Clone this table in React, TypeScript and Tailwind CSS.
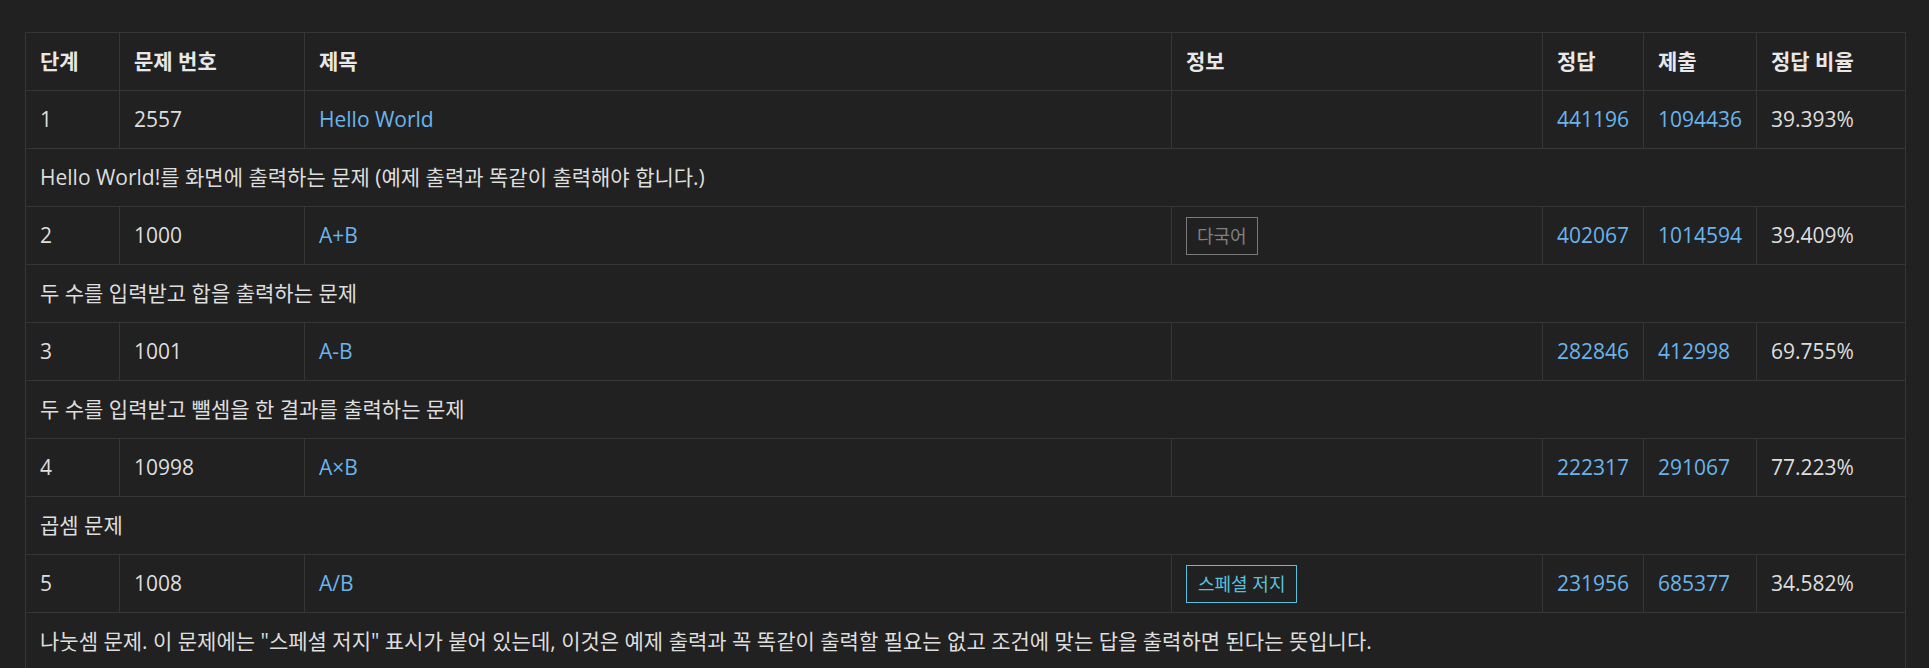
const rows = [
  {
    step: '1',
    id: '2557',
    title: 'Hello World',
    badge: null as null | 'multi' | 'special',
    ac: '441196',
    sub: '1094436',
    ratio: '39.393%',
    desc: 'Hello World!를 화면에 출력하는 문제 (예제 출력과 똑같이 출력해야 합니다.)',
  },
  {
    step: '2',
    id: '1000',
    title: 'A+B',
    badge: 'multi' as const,
    ac: '402067',
    sub: '1014594',
    ratio: '39.409%',
    desc: '두 수를 입력받고 합을 출력하는 문제',
  },
  {
    step: '3',
    id: '1001',
    title: 'A-B',
    badge: null,
    ac: '282846',
    sub: '412998',
    ratio: '69.755%',
    desc: '두 수를 입력받고 뺄셈을 한 결과를 출력하는 문제',
  },
  {
    step: '4',
    id: '10998',
    title: 'A×B',
    badge: null,
    ac: '222317',
    sub: '291067',
    ratio: '77.223%',
    desc: '곱셈 문제',
  },
  {
    step: '5',
    id: '1008',
    title: 'A/B',
    badge: 'special' as const,
    ac: '231956',
    sub: '685377',
    ratio: '34.582%',
    desc: '나눗셈 문제. 이 문제에는 "스페셜 저지" 표시가 붙어 있는데, 이것은 예제 출력과 꼭 똑같이 출력할 필요는 없고 조건에 맞는 답을 출력하면 된다는 뜻입니다.',
  },
];

function Badge({ kind }: { kind: 'multi' | 'special' }) {
  if (kind === 'multi') {
    return (
      <span className="inline-block border border-[#7a7a7a] px-[10px] text-[18px] leading-[36px] text-[#808080]">
        다국어
      </span>
    );
  }
  return (
    <span className="inline-block border border-[#5bc0de] px-[11px] text-[18px] leading-[36px] text-[#5bc0de]">
      스페셜 저지
    </span>
  );
}

const cell = 'border border-[#363636] px-[14px] h-[58px] align-middle';

export default function App() {
  return (
    <div
      className="min-h-screen w-full bg-[#212121] pt-[32px] pl-[25px] pr-[23px] text-[21px] text-[#dedede]"
      style={{ fontFamily: '"Open Sans", "Noto Sans CJK KR", sans-serif' }}
    >
      <table className="w-full table-fixed border-collapse">
        <colgroup>
          <col className="w-[94px]" />
          <col className="w-[185px]" />
          <col className="w-[867px]" />
          <col className="w-[371px]" />
          <col className="w-[101px]" />
          <col className="w-[113px]" />
          <col />
        </colgroup>
        <thead>
          <tr className="text-left font-bold text-[#e8e8e8]">
            <th className={cell}>단계</th>
            <th className={cell}>문제 번호</th>
            <th className={cell}>제목</th>
            <th className={cell}>정보</th>
            <th className={cell}>정답</th>
            <th className={cell}>제출</th>
            <th className={cell}>정답 비율</th>
          </tr>
        </thead>
        <tbody>
          {rows.map((r) => (
            <>
              <tr key={r.id}>
                <td className={cell}>{r.step}</td>
                <td className={cell}>{r.id}</td>
                <td className={cell}>
                  <a className="text-[#6ab4ec]">{r.title}</a>
                </td>
                <td className={cell}>{r.badge && <Badge kind={r.badge} />}</td>
                <td className={cell}>
                  <a className="text-[#6ab4ec]">{r.ac}</a>
                </td>
                <td className={cell}>
                  <a className="text-[#6ab4ec]">{r.sub}</a>
                </td>
                <td className={cell}>{r.ratio}</td>
              </tr>
              <tr key={r.id + '-d'}>
                <td className={cell} colSpan={7}>
                  {r.desc}
                </td>
              </tr>
            </>
          ))}
        </tbody>
      </table>
    </div>
  );
}
